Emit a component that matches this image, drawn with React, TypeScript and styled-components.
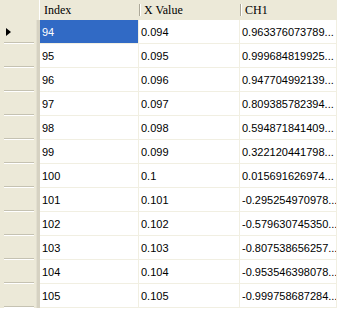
import { Fragment } from "react";
import styled, { createGlobalStyle } from "styled-components";

const GlobalStyle = createGlobalStyle`
  html, body {
    margin: 0;
    padding: 0;
    background: #ffffff;
  }
`;

const rows = [
  ["94", "0.094", "0.963376073789..."],
  ["95", "0.095", "0.999684819925..."],
  ["96", "0.096", "0.947704992139..."],
  ["97", "0.097", "0.809385782394..."],
  ["98", "0.098", "0.594871841409..."],
  ["99", "0.099", "0.322120441798..."],
  ["100", "0.1", "0.015691626974..."],
  ["101", "0.101", "-0.295254970978..."],
  ["102", "0.102", "-0.579630745350..."],
  ["103", "0.103", "-0.807538656257..."],
  ["104", "0.104", "-0.953546398078..."],
  ["105", "0.105", "-0.999758687284..."],
];

const columns = ["Index", "X Value", "CH1"];

const Grid = styled.div`
  width: 337px;
  height: 311px;
  overflow: hidden;
  display: grid;
  grid-template-columns: 40px 99px 101px 97px;
  grid-template-rows: 20px;
  grid-auto-rows: 24px;
  background: #ffffff;
`;

const Corner = styled.div`
  background: #ece9d8;
  border-right: 1px solid #ffffff;
`;

const HeaderCell = styled.div<{ $first?: boolean }>`
  position: relative;
  background: #ece9d8;
  font-family: "Liberation Serif", "Times New Roman", serif;
  font-size: 12px;
  color: #000000;
  display: flex;
  align-items: center;
  padding-left: ${(p) => (p.$first ? "4px" : "5px")};
  white-space: nowrap;

  &::before {
    content: ${(p) => (p.$first ? "none" : "''")};
    position: absolute;
    left: 0;
    top: 4px;
    bottom: 4px;
    width: 1px;
    background: #aca899;
    box-shadow: 1px 0 0 #ffffff;
  }
`;

const RowHeader = styled.div`
  position: relative;
  background: #ece9d8;
  border-right: 3px solid #d6d2c2;
  box-shadow: inset -1px 0 0 #e2dfd0;
  display: flex;
  align-items: center;
  padding-left: 6px;

  &::after {
    content: "";
    position: absolute;
    left: 4px;
    right: 3px;
    bottom: 1px;
    height: 1px;
    background: #c5c2b2;
    box-shadow: 0 1px 0 #ffffff;
  }
`;

const Arrow = styled.span`
  width: 0;
  height: 0;
  border-top: 4px solid transparent;
  border-bottom: 4px solid transparent;
  border-left: 5px solid #000000;
`;

const Cell = styled.div<{ $selected?: boolean }>`
  background: ${(p) => (p.$selected ? "#316ac5" : "#ffffff")};
  color: ${(p) => (p.$selected ? "#ffffff" : "#000000")};
  font-family: "Liberation Sans", Arial, sans-serif;
  font-size: 11px;
  display: flex;
  align-items: center;
  padding-left: 2px;
  white-space: nowrap;
  overflow: hidden;
  border-right: 1px solid #f1efe2;
  border-bottom: 1px solid #f1efe2;
`;

export default function App() {
  return (
    <>
      <GlobalStyle />
      <Grid>
        <Corner />
        {columns.map((c, i) => (
          <HeaderCell key={c} $first={i === 0}>
            {c}
          </HeaderCell>
        ))}
        {rows.map((r, ri) => (
          <Fragment key={r[0]}>
            <RowHeader>{ri === 0 && <Arrow />}</RowHeader>
            {r.map((v, ci) => (
              <Cell key={ci} $selected={ri === 0 && ci === 0}>
                {v}
              </Cell>
            ))}
          </Fragment>
        ))}
      </Grid>
    </>
  );
}
